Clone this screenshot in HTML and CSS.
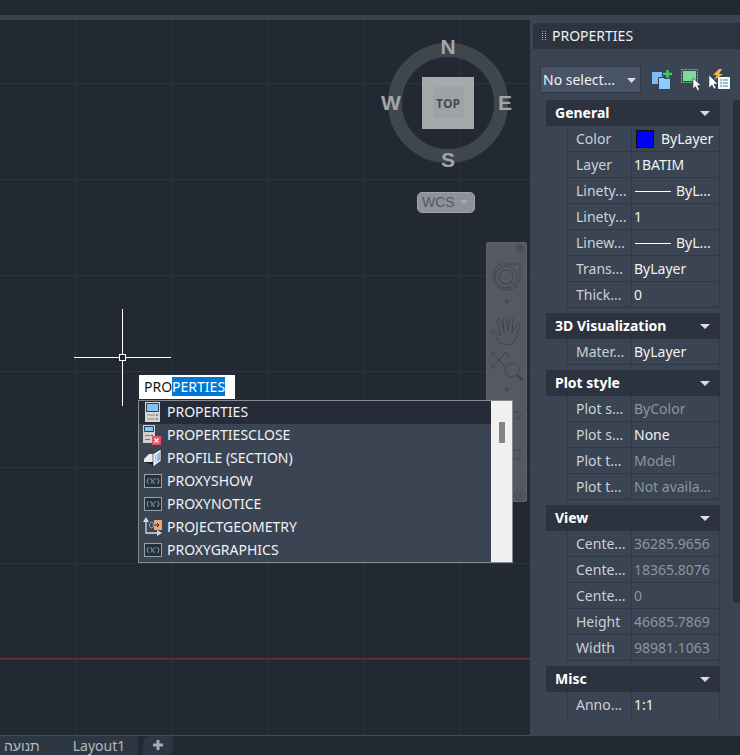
FILE: index.html
```
<!DOCTYPE html>
<html lang="en">
<head>
  <meta charset="UTF-8" />
  <meta name="viewport" content="width=device-width, initial-scale=1" />
  <title>Drawing</title>
  <link rel="stylesheet" href="styles.css">
</head>
<body>
  <div class="topbar"></div>

  <main class="workspace">
    <section class="canvas" aria-label="Drawing area">
      <div class="axis"></div>

      <svg class="viewcube" width="136" height="140" viewBox="0 0 136 140" role="img" aria-label="View cube">
        <circle cx="68" cy="70" r="53" fill="none" stroke="#3f464e" stroke-width="14" />
        <rect x="42" y="44" width="52" height="52" fill="#a7a9ad" />
        <rect x="53" y="54" width="31" height="31" fill="#9fa2a6" />
        <text class="cube-face" x="68" y="75">TOP</text>
        <text class="compass" x="68" y="21">N</text>
        <text class="compass" x="68" y="134">S</text>
        <text class="compass" x="11" y="77">W</text>
        <text class="compass" x="125" y="77">E</text>
      </svg>
      <button class="wcs">WCS
        <svg width="8" height="5" viewBox="0 0 8 5"><path d="M0 0h8L4 5z" fill="#a5a8b2" /></svg>
      </button>

      <div class="navbar">
        <svg width="41" height="260" viewBox="0 0 41 260" fill="none" stroke="#41464d">
          <circle cx="34" cy="6" r="4" fill="#4b5057" stroke="none" />
          <path d="M32 4l4 4m0-4l-4 4" />
          <path d="M14 22h20v13c0 7-5 13-13 13S7 43 7 35c0-7 3-10 7-13z" />
          <circle cx="20" cy="35" r="11" /><circle cx="20" cy="35" r="7" />
          <path d="M25 40l7 6" />
          <path d="M19 59h4l-2 2z" fill="#41464d" />
          <path d="M13 101c-2-5-5-9-8-10 1-3 5-2 8 2l2 1-4-15c1-3 3-2 4 1l3 10-1-13c1-3 4-2 4 0l1 12 2-12c1-2 4-1 3 1l-1 13 5-9c2-2 4 0 3 2l-5 14-4 5z" />
          <path d="M6 110l14 16M6 126l13-15M6 110v4m0-4h4M6 126v-4m0 4h4m12-15h-4m4 0v4" />
          <circle cx="26" cy="128" r="7" /><path d="M31 133l5 5" stroke-width="3" />
          <path d="M19 147h4l-2 2z" fill="#41464d" />
          <path d="M28 170c6-1 8 3 5 7l-4-1" />
          <rect x="14" y="208" width="20" height="9" />
          <circle cx="34" cy="253" r="5" /><path d="M32 252h4l-2 3z" />
        </svg>
      </div>

      <svg class="crosshair" width="98" height="98" viewBox="0 0 98 98" stroke="#fff" fill="none" shape-rendering="crispEdges">
        <path d="M48.500 0v46M48.500 52v45M0 48.500h46M52 48.500h45" />
        <rect x="45.500" y="45.500" width="6" height="6" />
      </svg>

      <div class="command">
        <input id="command" class="command-input" type="text" value="PROPERTIES" aria-label="Command" autocomplete="off" spellcheck="false">
        <div class="suggestions">
          <div class="suggestion-list">
            <button class="suggestion active">
              <svg width="20" height="20" viewBox="0 0 20 20">
                <path d="M3 0h15v20H3z" fill="#d8d6d3" /><path d="M4.500 1.500h12v8h-12z" fill="#7fc4f5" stroke="#33404e" />
                <path d="M5 13h8M5 17h8" stroke="#a07c78" /><path d="M14 13h2M14 17h2" stroke="#444" />
              </svg>
              PROPERTIES
            </button>
            <button class="suggestion">
              <svg width="20" height="20" viewBox="0 0 20 20">
                <path d="M1 0h12v18H1z" fill="#cfd0d1" /><path d="M2.500 1.500h9v5h-9z" fill="#7fc4f5" stroke="#33404e" />
                <path d="M3 10.500h5M3 14.500h5" stroke="#8b7776" /><path d="M9 10.500h2" stroke="#444" />
                <rect x="10" y="11" width="9" height="9" rx="1" fill="#ec5265" /><path d="M12.500 13.500l4 4m0-4l-4 4" stroke="#fff" stroke-width="1.300" />
              </svg>
              PROPERTIESCLOSE
            </button>
            <button class="suggestion">
              <svg width="20" height="20" viewBox="0 0 20 20">
                <path d="M2 11l5-5h6v8H2z" fill="#e9ebee" /><path d="M2 14h9v5l-2-3z" fill="#15181d" />
                <path d="M11 6l8-5v12l-8 6z" fill="#f5f5f5" stroke="#15181d" stroke-width=".6" /><path d="M13 7l5-3v8l-5 3z" fill="#86b8ef" />
                <path d="M15 6l-1 8" stroke="#e9f3fc" />
              </svg>
              PROFILE (SECTION)
            </button>
            <button class="suggestion">
              <svg width="20" height="20" viewBox="0 0 20 20" fill="none">
                <rect x="2.500" y="3.500" width="17" height="13" fill="#26303b" stroke="#98a1aa" />
                <path d="M6.500 7q-3 3 0 6M15.500 7q3 3 0 6" stroke="#7ba6c1" /><path d="M8 8c3-1 2 4 1 4.500M14 8c-3-1-5 5-1 4" stroke="#7ba6c1" />
              </svg>
              PROXYSHOW
            </button>
            <button class="suggestion">
              <svg width="20" height="20" viewBox="0 0 20 20" fill="none">
                <rect x="2.500" y="3.500" width="17" height="13" fill="#26303b" stroke="#98a1aa" />
                <path d="M6.500 7q-3 3 0 6M15.500 7q3 3 0 6" stroke="#7ba6c1" /><path d="M8 8c3-1 2 4 1 4.500M14 8c-3-1-5 5-1 4" stroke="#7ba6c1" />
              </svg>
              PROXYNOTICE
            </button>
            <button class="suggestion">
              <svg width="20" height="20" viewBox="0 0 20 20">
                <path d="M4 3v13h13" fill="none" stroke="#d5d9df" stroke-width="1.300" />
                <path d="M4 0l3 5H1zM20 16l-5-3v6z" fill="#d5d9df" />
                <rect x="12" y="3" width="8" height="10" fill="#efa470" /><path d="M12 8h5m-2-2l2 2-2 2" stroke="#332b2b" fill="none" />
                <ellipse cx="9.500" cy="8" rx="2" ry="3" fill="none" stroke="#6eaed0" />
              </svg>
              PROJECTGEOMETRY
            </button>
            <button class="suggestion">
              <svg width="20" height="20" viewBox="0 0 20 20" fill="none">
                <rect x="2.500" y="3.500" width="17" height="13" fill="#26303b" stroke="#98a1aa" />
                <path d="M6.500 7q-3 3 0 6M15.500 7q3 3 0 6" stroke="#7ba6c1" /><path d="M8 8c3-1 2 4 1 4.500M14 8c-3-1-5 5-1 4" stroke="#7ba6c1" />
              </svg>
              PROXYGRAPHICS
            </button>
          </div>
          <div class="suggestion-scroll"><div class="suggestion-thumb"></div></div>
        </div>
      </div>
    </section>

    <aside class="panel">
      <header class="panel-title">
        <svg width="5" height="11" viewBox="0 0 5 11" fill="#aab0b9"><path d="M0 0h1v1H0zM3 0h1v1H3zM0 2h1v1H0zM3 2h1v1H3zM0 4h1v1H0zM3 4h1v1H3zM0 6h1v1H0zM3 6h1v1H3zM0 8h1v1H0zM3 8h1v1H3z" /></svg>
        <h1>PROPERTIES</h1>
      </header>

      <div class="toolbar">
        <div class="select-wrap">
          <select class="object-select" aria-label="Selected objects">
            <option>No select...</option>
          </select>
          <svg class="select-arrow" width="10" height="6" viewBox="0 0 10 6"><path d="M0 0h9L4.500 5z" fill="#d9dde3" /></svg>
        </div>
        <button class="tool" aria-label="Toggle PICKADD">
          <svg width="22" height="22" viewBox="0 0 22 22">
            <path d="M1 3h11v12H1z" fill="#7fbdf0" /><path d="M7.500 8.500h12v12h-12z" fill="#8cccff" stroke="#35404e" />
            <path d="M16 0v10M11 5h10" stroke="#35404e" stroke-width="5" /><path d="M16.500 1v8M12 5h9" stroke="#43c96b" stroke-width="2.500" />
          </svg>
        </button>
        <button class="tool" aria-label="Select objects">
          <svg width="22" height="22" viewBox="0 0 22 22">
            <rect x="3" y="2" width="13" height="10" fill="#7edb95" /><rect x="1.500" y=".5" width="16" height="13" fill="none" stroke="#5fc67c" stroke-dasharray="2 1" />
            <path d="M13 9v11l2.500-2.500 2 4 2-1-2-4H21z" fill="#fff" stroke="#3c4452" stroke-width=".7" />
          </svg>
        </button>
        <button class="tool" aria-label="Quick select">
          <svg width="22" height="22" viewBox="0 0 22 22">
            <path d="M10 0L4 6h4l-3 5 9-6h-4l3-5z" fill="#f6b955" />
            <path d="M0 6v13l3-3 2 4 2-1-2-4h4z" fill="#fff" stroke="#222a34" stroke-width=".5" />
            <rect x="9" y="8" width="12" height="12" fill="#f4f8fb" /><path d="M11 11h2M11 14h2M11 17h2M14 11h5M14 14h5M14 17h5" stroke="#3c83bd" />
          </svg>
        </button>
      </div>

      <div class="panel-body">
        <div class="groups">
          <section class="group">
            <button class="group-head">General <i class="caret"></i></button>
            <table class="props">
              <tr><th scope="row">Color</th><td><span class="swatch"></span>ByLayer</td></tr>
              <tr><th scope="row">Layer</th><td>1BATIM</td></tr>
              <tr><th scope="row">Linety...</th><td><span class="line"></span>ByL...</td></tr>
              <tr><th scope="row">Linety...</th><td>1</td></tr>
              <tr><th scope="row">Linew...</th><td><span class="line"></span>ByL...</td></tr>
              <tr><th scope="row">Trans...</th><td>ByLayer</td></tr>
              <tr><th scope="row">Thick...</th><td>0</td></tr>
            </table>
          </section>
          <section class="group">
            <button class="group-head">3D Visualization <i class="caret"></i></button>
            <table class="props">
              <tr><th scope="row">Mater...</th><td>ByLayer</td></tr>
            </table>
          </section>
          <section class="group">
            <button class="group-head">Plot style <i class="caret"></i></button>
            <table class="props">
              <tr><th scope="row">Plot s...</th><td class="locked">ByColor</td></tr>
              <tr><th scope="row">Plot s...</th><td>None</td></tr>
              <tr><th scope="row">Plot t...</th><td class="locked">Model</td></tr>
              <tr><th scope="row">Plot t...</th><td class="locked">Not availa...</td></tr>
            </table>
          </section>
          <section class="group">
            <button class="group-head">View <i class="caret"></i></button>
            <table class="props">
              <tr><th scope="row">Cente...</th><td class="locked">36285.9656</td></tr>
              <tr><th scope="row">Cente...</th><td class="locked">18365.8076</td></tr>
              <tr><th scope="row">Cente...</th><td class="locked">0</td></tr>
              <tr><th scope="row">Height</th><td class="locked">46685.7869</td></tr>
              <tr><th scope="row">Width</th><td class="locked">98981.1063</td></tr>
            </table>
          </section>
          <section class="group">
            <button class="group-head">Misc <i class="caret"></i></button>
            <table class="props">
              <tr><th scope="row">Anno...</th><td>1:1</td></tr>
            </table>
          </section>
        </div>
        <div class="panel-scroll"></div>
      </div>
    </aside>
  </main>

  <nav class="tabs" aria-label="Layouts">
    <button class="tab" lang="he">תנועה</button>
    <button class="tab">Layout1</button>
    <button class="tab tab-add" aria-label="New layout">
      <svg width="12" height="12" viewBox="0 0 12 12"><path d="M6 1v10M1 6h10" stroke="#a3abb5" stroke-width="3" /></svg>
    </button>
  </nav>

  <script>
    // Keep the completed part of the command name selected
    const command = document.getElementById("command");
    command.focus();
    command.setSelectionRange(3, command.value.length);
  </script>
</body>
</html>
```
FILE: styles.css
```
* {
  box-sizing: border-box;
}

body {
  margin: 0;
  height: 100vh;
  display: flex;
  flex-direction: column;
  overflow: hidden;
  background-color: #222933;
  color: #f0f2f4;
  font: 14px/20px "Noto Sans", "Liberation Sans", sans-serif;
}

button, input, select {
  margin: 0;
  padding: 0;
  border: none;
  background: none;
  color: inherit;
  font: inherit;
}

.topbar {
  flex: none;
  height: 20px;
  border-bottom: 5px solid #3b424f;
}

.workspace {
  flex: 1;
  min-height: 0;
  display: flex;
}

/* Drawing area */
.canvas {
  position: relative;
  flex: 1;
  background-image:
    linear-gradient(90deg, #2d343e 1px, transparent 1px),
    linear-gradient(#2d343e 1px, transparent 1px);
  background-size: 96px 96px;
  background-position: 75px 63px;
  border-bottom: 1px solid #434b56;
}

.axis {
  position: absolute;
  top: 638px;
  left: 0;
  right: 0;
  height: 1px;
  background-color: #6b302f;
}

.viewcube {
  position: absolute;
  top: 13px;
  right: 14px;
}

.viewcube text {
  text-anchor: middle;
  font-family: "Liberation Sans", sans-serif;
  font-weight: bold;
}

.viewcube .compass {
  font-size: 21px;
  fill: #a2a5a9;
}

.viewcube .cube-face {
  font-family: "Open Sans", "Noto Sans", sans-serif;
  font-size: 12px;
  fill: #454a52;
}

.wcs {
  position: absolute;
  top: 172px;
  right: 55px;
  width: 58px;
  height: 21px;
  display: flex;
  align-items: center;
  justify-content: space-between;
  padding: 0 6px 0 4px;
  border: 1px solid #a0a2ac;
  border-radius: 5px;
  background-color: #8f929c;
  color: #565b66;
  font: 14px/19px "Liberation Sans", sans-serif;
}

.navbar {
  position: absolute;
  top: 222px;
  right: 3px;
  height: 260px;
  border-radius: 3px;
  background-color: #555a60;
  box-shadow: inset 0 0 0 1px #5e6369;
}

.crosshair {
  position: absolute;
  top: 289px;
  left: 74px;
}

/* Command entry with suggestions */
.command {
  position: absolute;
  top: 355px;
  left: 138px;
  width: 375px;
}

.command-input {
  display: block;
  width: 96px;
  height: 24px;
  margin: 0 0 1px 1px;
  padding: 0 5px 2px;
  outline: none;
  background-color: #fff;
  color: #16191d;
  caret-color: transparent;
}

.command-input::selection {
  background-color: #0078d7;
  color: #fff;
}

.suggestions {
  display: flex;
  border: 1px solid #858a90;
  background-color: #3b4452;
}

.suggestion-list {
  flex: 1;
}

.suggestion {
  display: flex;
  align-items: center;
  gap: 5px;
  width: 100%;
  height: 23px;
  padding: 0 0 1px 3px;
  text-align: left;
}

.suggestion.active {
  background-color: #262c37;
}

.suggestion-scroll {
  width: 21px;
  padding-top: 21px;
  background-color: #f0f0f0;
}

.suggestion-thumb {
  width: 6px;
  height: 21px;
  margin-left: 8px;
  background-color: #858585;
}

/* Properties panel */
.panel {
  flex: none;
  width: 210px;
  margin-top: -5px;
  padding: 8px 0 18px 3px;
  display: flex;
  flex-direction: column;
  background-color: #3b4452;
}

.panel-title {
  display: flex;
  align-items: center;
  gap: 5px;
  height: 26px;
  padding-left: 9px;
  border-top-left-radius: 4px;
  background-color: #2d333f;
}

.panel-title h1 {
  margin: 0;
  font-size: 14px;
  font-weight: normal;
}

.toolbar {
  display: flex;
  align-items: center;
  gap: 7px;
  margin: 17px 9px 7px 7px;
}

.select-wrap {
  position: relative;
  flex: 1;
  margin-right: 3px;
}

.object-select {
  appearance: none;
  display: block;
  width: 100%;
  height: 27px;
  padding-left: 2px;
  border: 1px solid #2f3844;
  background-color: #485465;
}

.select-arrow {
  position: absolute;
  top: 12px;
  right: 4px;
  pointer-events: none;
}

.tool {
  width: 22px;
  height: 22px;
}

.tool svg, .navbar svg {
  display: block;
}

.panel-body {
  flex: 1;
  min-height: 0;
  display: flex;
  gap: 13px;
  padding-left: 13px;
}

.groups {
  flex: 1;
  min-width: 0;
  overflow: hidden;
}

.group {
  margin-bottom: 5px;
}

.group-head {
  display: flex;
  align-items: center;
  justify-content: space-between;
  width: 100%;
  height: 26px;
  padding: 0 10px 0 9px;
  background-color: #2c323e;
  color: #fff;
  font-weight: bold;
}

.caret {
  border: 5px solid transparent;
  border-top-color: #d9dde3;
  border-bottom: none;
}

.props {
  width: calc(100% - 21px);
  margin-left: 21px;
  table-layout: fixed;
  border-spacing: 0;
}

.props th, .props td {
  height: 26px;
  padding: 0 0 0 2px;
  border-right: 1px solid #303946;
  border-bottom: 1px solid #303946;
  text-align: left;
  font-weight: normal;
  white-space: nowrap;
}

.props th {
  width: 65px;
  padding-left: 8px;
  border-left: 1px solid #303946;
  color: #cdd1d7;
}

.group:last-child th, .group:last-child td {
  border-bottom: none;
}

.props .locked {
  color: #8e959f;
}

.swatch {
  display: inline-block;
  width: 18px;
  height: 18px;
  margin: -2px 7px 0 2px;
  border: 1px solid #0b0d18;
  background-color: #00f;
  vertical-align: middle;
}

.line {
  display: inline-block;
  width: 36px;
  height: 1px;
  margin: 0 5px 0 1px;
  background-color: #fff;
  vertical-align: middle;
}

.panel-scroll {
  width: 7px;
  height: 503px;
  border-radius: 4px 0 0 4px;
  background-color: #28303c;
}

/* Layout tabs */
.tabs {
  flex: none;
  display: flex;
  height: 19px;
}

.tab {
  padding: 0 13px 0 11px;
  background-color: #2d3743;
  color: #b3b9c1;
  line-height: 19px;
}

.tab:first-child {
  padding: 0 22px 0 4px;
}

.tab-add {
  margin-left: 5px;
  padding: 3px 9px;
  border-radius: 8px 0 8px 0;
  line-height: 12px;
}
```
